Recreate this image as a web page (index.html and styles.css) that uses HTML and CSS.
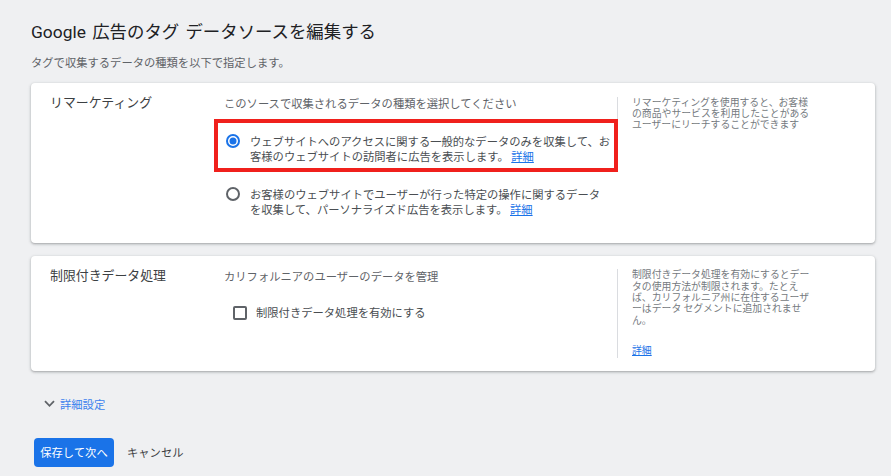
FILE: index.html
```html
<!DOCTYPE html>
<html lang="ja">
<head>
<meta charset="utf-8">
<title>Google 広告のタグ データソースを編集する</title>
<link rel="stylesheet" href="styles.css">
</head>
<body>
<div class="page">
  <h1 class="title">Google 広告のタグ データソースを編集する</h1>
  <p class="subtitle">タグで収集するデータの種類を以下で指定します。</p>

  <section class="card">
    <div class="label">リマーケティング</div>
    <div class="middle">
      <div class="heading">このソースで収集されるデータの種類を選択してください</div>
      <div class="options">
        <label class="option highlight">
          <svg class="radio" width="14" height="14" viewBox="0 0 14 14"><circle cx="7" cy="7" r="6" fill="none" stroke="#1a73e8" stroke-width="2"/><circle cx="7" cy="7" r="3.5" fill="#1a73e8"/></svg>
          <span class="option-text">ウェブサイトへのアクセスに関する一般的なデータのみを収集して、お<br>客様のウェブサイトの訪問者に広告を表示します。 <a class="link" href="#">詳細</a></span>
        </label>
        <label class="option">
          <svg class="radio" width="14" height="14" viewBox="0 0 14 14"><circle cx="7" cy="7" r="6" fill="none" stroke="#5f6368" stroke-width="2"/></svg>
          <span class="option-text">お客様のウェブサイトでユーザーが行った特定の操作に関するデータ<br>を収集して、パーソナライズド広告を表示します。 <a class="link" href="#">詳細</a></span>
        </label>
      </div>
    </div>
    <div class="help">リマーケティングを使用すると、お客様の商品やサービスを利用したことがあるユーザーにリーチすることができます</div>
  </section>

  <section class="card">
    <div class="label">制限付きデータ処理</div>
    <div class="middle">
      <div class="heading">カリフォルニアのユーザーのデータを管理</div>
      <label class="check-row">
        <span class="checkbox"></span>
        <span>制限付きデータ処理を有効にする</span>
      </label>
    </div>
    <div class="help">制限付きデータ処理を有効にするとデータの使用方法が制限されます。たとえば、カリフォルニア州に在住するユーザーはデータ セグメントに追加されません。<a class="link help-link" href="#">詳細</a></div>
  </section>

  <div class="advanced">
    <svg class="chevron" width="11" height="8" viewBox="0 0 11 8"><path d="M1 1.2 L5.5 5.8 L10 1.2" fill="none" stroke="#5f6368" stroke-width="1.8"/></svg>
    <span>詳細設定</span>
  </div>

  <div class="actions">
    <button class="primary" type="button">保存して次へ</button>
    <button class="cancel" type="button">キャンセル</button>
  </div>
</div>
</body>
</html>
```

FILE: styles.css
```css
html, body {
  margin: 0;
  background: #eff0f2;
}

body {
  font-family: "Noto Sans CJK JP", sans-serif;
  font-size: 11.3px;
  color: #3c4043;
}

.page {
  padding: 20px 16px 0 31px;
}

.title {
  margin: 0;
  font-family: Roboto, "Noto Sans CJK JP", sans-serif;
  font-size: 17.4px;
  line-height: 24px;
  font-weight: 400;
  word-spacing: 2px;
  color: #202124;
}

.subtitle {
  margin: 10px 0 0;
  font-size: 11.3px;
  line-height: 16px;
  color: #5f6368;
}

.card {
  margin-top: 13px;
  background: #fff;
  border-radius: 4px;
  box-shadow: 0 1px 2px rgba(60, 64, 67, 0.3), 0 1px 3px 1px rgba(60, 64, 67, 0.12);
  padding: 10px 19px 12.4px;
  display: grid;
  grid-template-columns: 174px 393px 1fr;
  align-items: start;
  position: relative;
}

.label {
  font-size: 12.9px;
  line-height: 17px;
  color: #3c4043;
}

.heading {
  font-size: 11.3px;
  line-height: 20px;
  color: #5f6368;
}

.options {
  margin-top: 20.5px;
  padding-bottom: 14px;
  display: flex;
  flex-direction: column;
  gap: 23px;
}

.option {
  position: relative;
  margin-left: 2px;
  display: flex;
  gap: 10px;
  line-height: 15px;
  color: #4a4e52;
}

.radio {
  flex: none;
  margin-top: 0.5px;
}

.option-text {
  white-space: nowrap;
}

.option.highlight::after {
  content: "";
  position: absolute;
  left: -12px;
  top: -14.5px;
  right: -1px;
  bottom: -8.8px;
  border: 4px solid #f0201c;
  pointer-events: none;
}

.link {
  color: #1a73e8;
  text-decoration: underline;
}

.help {
  margin-top: 3.5px;
  border-left: 1px solid #dadce0;
  padding: 0 0 1.6px 14px;
  width: 180px;
  font-size: 9.85px;
  line-height: 11.3px;
  color: #757a80;
}

.help-link {
  display: block;
  width: max-content;
  margin-top: 19.35px;
}

.check-row {
  margin: 19.5px 0 0 9px;
  display: flex;
  align-items: center;
  gap: 9px;
  line-height: 15px;
  color: #4a4e52;
}

.checkbox {
  flex: none;
  width: 14px;
  height: 14px;
  box-sizing: border-box;
  border: 2px solid #5f6368;
  border-radius: 2px;
}

.advanced {
  margin-top: 25.3px;
  padding-left: 13px;
  display: flex;
  align-items: center;
  gap: 5px;
  line-height: 16px;
  color: #3d82ee;
}

.chevron {
  flex: none;
}

.actions {
  margin-top: 26px;
  margin-left: 3px;
  display: flex;
  align-items: center;
  gap: 13px;
}

.primary {
  width: 80px;
  height: 29px;
  padding: 0;
  border: none;
  border-radius: 4px;
  background: #1a73e8;
  color: #fff;
  font: inherit;
  font-size: 11.3px;
}

.cancel {
  padding: 0;
  border: none;
  background: none;
  color: #3c4043;
  font: inherit;
  font-size: 11.3px;
}
```
